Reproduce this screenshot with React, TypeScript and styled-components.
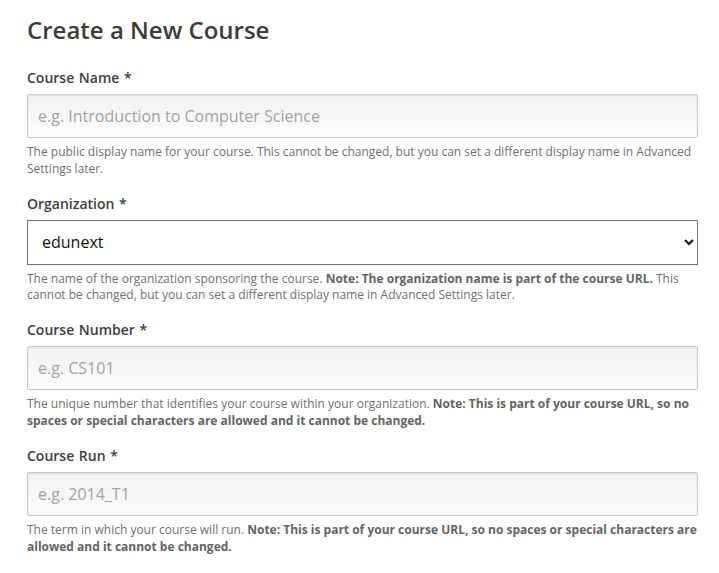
import React from 'react';
import styled, { createGlobalStyle } from 'styled-components';

const GlobalStyle = createGlobalStyle`
  body {
    margin: 0;
    background: #fff;
    font-family: "Open Sans", "Liberation Sans", sans-serif;
  }
`;

const Page = styled.div`
  padding: 0 21px 0 27px;
`;

const Title = styled.h1`
  margin: 0 0 21px;
  padding-top: 14px;
  font-size: 24px;
  line-height: 32px;
  font-weight: 600;
  color: #3c3c3c;
`;

const Field = styled.div`
  display: flex;
  flex-direction: column;
  margin-bottom: 15px;
`;

const Label = styled.label`
  font-size: 14px;
  line-height: 20px;
  font-weight: 600;
  color: #3d3e3f;
  margin: 1px 0 6px;
  word-spacing: 1px;
`;

const TextInput = styled.input`
  box-sizing: border-box;
  width: 100%;
  height: 44px;
  padding: 0 10px;
  border: 1px solid #c8c8c8;
  border-radius: 2px;
  background: linear-gradient(#f1f1f1, #fcfcfc);
  box-shadow: inset 0 1px 2px rgba(0, 0, 0, 0.08);
  font-family: inherit;
  font-size: 16px;
  color: #3c3c3c;
  outline: none;

  &::placeholder {
    color: #a3a3a3;
  }
`;

const Select = styled.select`
  box-sizing: border-box;
  width: 100%;
  height: 45px;
  padding: 0 10px;
  border: 1px solid #707070;
  border-radius: 0;
  background: #fff;
  font-family: inherit;
  font-size: 16px;
  color: #111;
`;

const Help = styled.p`
  margin: 6px 0 0;
  font-size: 12px;
  line-height: 16.8px;
  color: #707070;

  strong {
    font-weight: 700;
    color: #646464;
  }
`;

export default function App() {
  return (
    <Page>
      <GlobalStyle />
      <Title>Create a New Course</Title>

      <Field>
        <Label>Course Name *</Label>
        <TextInput placeholder="e.g. Introduction to Computer Science" />
        <Help>
          The public display name for your course. This cannot be changed, but you can set a
          different display name in Advanced Settings later.
        </Help>
      </Field>

      <Field>
        <Label>Organization *</Label>
        <Select defaultValue="edunext">
          <option value="edunext">edunext</option>
        </Select>
        <Help>
          The name of the organization sponsoring the course.{' '}
          <strong>Note: The organization name is part of the course URL.</strong> This cannot
          be changed, but you can set a different display name in Advanced Settings later.
        </Help>
      </Field>

      <Field>
        <Label>Course Number *</Label>
        <TextInput placeholder="e.g. CS101" />
        <Help>
          The unique number that identifies your course within your organization.{' '}
          <strong>
            Note: This is part of your course URL, so no spaces or special characters are
            allowed and it cannot be changed.
          </strong>
        </Help>
      </Field>

      <Field>
        <Label>Course Run *</Label>
        <TextInput placeholder="e.g. 2014_T1" />
        <Help>
          The term in which your course will run.{' '}
          <strong>
            Note: This is part of your course URL, so no spaces or special characters are
            allowed and it cannot be changed.
          </strong>
        </Help>
      </Field>
    </Page>
  );
}
